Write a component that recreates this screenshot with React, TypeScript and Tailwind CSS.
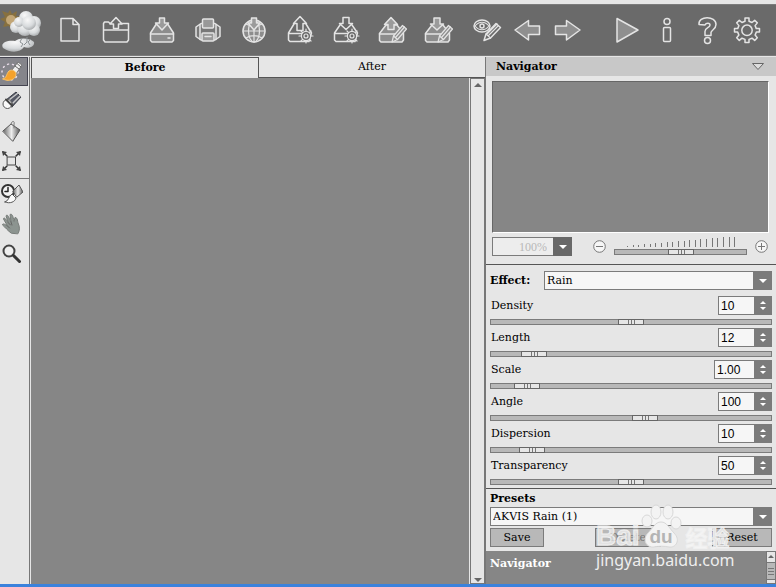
import React, { useState } from 'react';

interface IconButtonProps {
  label: string;
  className?: string;
  children: React.ReactNode;
}

const ToolbarButton: React.FC<IconButtonProps> = ({ label, className = 'w-[46px]', children }) => (
  <button type="button" aria-label={label} className={`${className} flex h-full shrink-0 items-center justify-center`}>
    <svg
      width="30"
      height="30"
      viewBox="0 0 30 30"
      fill="none"
      stroke="#e4e4e4"
      strokeWidth="1.5"
      strokeLinejoin="round"
      strokeLinecap="round"
    >
      {children}
    </svg>
  </button>
);

const Gear = () => (
  <g strokeWidth="1.2">
    <circle cx="21" cy="21" r="4.6" fill="#6a6a6a" />
    <circle cx="21" cy="21" r="2" />
    <path d="M21 14v2M21 26v2M14 21h2M26 21h2M16 16l1.6 1.6M24.4 24.4l1.6 1.6M26 16l-1.6 1.6M17.6 24.4L16 26" />
  </g>
);

const Pencil = () => (
  <g strokeWidth="1.2">
    <path d="M15 27l1.5-6L25.500 10.500l4 3.500-9 10.500z" fill="#8c8c8c" />
    <path d="M16.500 21l4 3.500M18.500 22.500l9-10.500" />
  </g>
);

const Logo = () => (
  <svg width="42" height="44" viewBox="0 0 42 44" className="shrink-0" aria-label="Weather effects" role="img">
    <defs>
      <radialGradient id="puff" cx="0.4" cy="0.3" r="0.75">
        <stop offset="0" stopColor="#f8f8f8" />
        <stop offset="0.6" stopColor="#d8dbdd" />
        <stop offset="1" stopColor="#a4a7a9" />
      </radialGradient>
    </defs>
    <path
      d="M10 2l2 4 5-3-1 5 6 1-4 4 2 6-5-1-3 5-3-5-6 1 2-5-5-3 5-2-3-6 6 2z"
      fill="#87703f"
    />
    <circle cx="11" cy="12" r="5" fill="#c2a676" />
    <g fill="url(#puff)">
      <circle cx="26" cy="10" r="7" />
      <circle cx="34" cy="15" r="7" />
      <circle cx="16" cy="19" r="6" />
      <circle cx="25" cy="20" r="8" />
      <circle cx="34" cy="22" r="6" />
      <circle cx="19" cy="14" r="5" />
      <circle cx="29" cy="15" r="7" />
      <path d="M3 40c-3-5 4-8 12-7 5-4 15-3 19 1 1 4-5 7-10 5-4 6-14 6-21 1z" />
    </g>
    <path d="M22 30l-2 4 3 2-2 3M27 29v5l-3 3M31 31l-3 3 2 3" stroke="#8c9295" fill="none" />
  </svg>
);

const Globe = () => (
  <>
    <circle cx="15" cy="16" r="11" fill="#8c8c8c" />
    <path d="M4 16h22M15 5v22M7 9c5 3 11 3 16 0M7 23c5-3 11-3 16 0" strokeWidth="1.2" />
    <ellipse cx="15" cy="16" rx="5.5" ry="11" strokeWidth="1.2" />
    <path d="M12.500 3h5v5h3.500l-6 7-6-7h3.500z" fill="#9b9b9b" />
  </>
);

const Toolbar = () => (
  <header className="flex h-[52px] shrink-0 items-center border-y border-y-[#7b7b7b] bg-[#6a6a6a]">
    <div className="flex w-[47px] shrink-0">
      <Logo />
    </div>
    <div className="flex h-full">
      <ToolbarButton label="New">
        <path d="M6 3.500h12l6 6V26H6zM18 3.500v6h6" />
      </ToolbarButton>
      <ToolbarButton label="Open">
        <path d="M10 8.500H9L7.500 7H3.500L2.500 8.500V25L4 27h22l1.500-2V8.500h-7M2.500 15h25" />
        <path d="M15 2.500l6 6.500h-3.500v4.500h-5V9H9z" fill="#6a6a6a" />
      </ToolbarButton>
      <ToolbarButton label="Save">
        <path d="M9 9.500L3.500 18v7.500L5 27h20l1.500-1.500V18L21 9.500z" fill="#8c8c8c" />
        <path d="M3.500 19h23M21 23h2" />
        <path d="M12.500 3h5v5h4l-6.500 7-6.500-7h4z" fill="#9b9b9b" />
      </ToolbarButton>
      <ToolbarButton label="Print">
        <path d="M8 8.500L3 12v9.500L8 25h14l5-3.500V12L22 8.500z" fill="#787878" />
        <path d="M7 9.500v15M23 9.500v15" />
        <rect x="9.5" y="4" width="11" height="9" rx="1" fill="#999" />
        <rect x="9" y="18" width="12" height="8" rx="1" fill="#999" />
        <path d="M12 21.500h6" />
      </ToolbarButton>
      <ToolbarButton label="Publish">
        <Globe />
      </ToolbarButton>
      <ToolbarButton label="Load presets">
        <path d="M9 9L3.500 18v7L5 26.500h19L26.500 18 21 9M3.500 18.500H20" />
        <path d="M15 1.500l6.500 7H18v7h-6v-7H8.500z" fill="#6a6a6a" />
        <Gear />
      </ToolbarButton>
      <ToolbarButton label="Save presets">
        <path d="M9 10l-5.500 8v7L5 26.500h19L26.500 18 21 10M3.500 18.500H20" />
        <path d="M12 2.500h6v6h3.500l-6.500 6-6.500-6H12z" fill="#6a6a6a" />
        <Gear />
      </ToolbarButton>
      <ToolbarButton label="Load strokes">
        <path d="M9 10l-6.500 8.500v7L4 27h21l1.500-2v-6.500L20 10z" fill="#8c8c8c" />
        <path d="M2.500 19H18" />
        <path d="M14 2.500l6.500 7H17v5h-6v-5H7.500z" fill="#9b9b9b" />
        <Pencil />
      </ToolbarButton>
      <ToolbarButton label="Save strokes">
        <path d="M9 10l-6.500 8.500v7L4 27h21l1.500-2v-6.500L20 10z" fill="#8c8c8c" />
        <path d="M2.500 19H18" />
        <path d="M11 3h6v6h3.500L14 15 7.500 9H11z" fill="#9b9b9b" />
        <Pencil />
      </ToolbarButton>
    </div>
    <div className="ml-1.5 flex h-full">
      <ToolbarButton label="Show strokes" className="w-10">
        <ellipse cx="10" cy="11" rx="8" ry="6" />
        <path d="M3 11c4-5 10-5 14 0-4 5-10 5-14 0z" strokeWidth="1.2" />
        <circle cx="10" cy="11" r="2" />
        <path d="M12 25.500l2-6.500L24 8.500l4.500 4L18.500 23z" fill="#6a6a6a" />
        <path d="M14 19l4.500 4M17 20l9-9M15.500 18.500L25 9" strokeWidth="1.2" />
      </ToolbarButton>
      <ToolbarButton label="Undo" className="w-10">
        <path d="M3 15L16.500 5.500V11h11v8.500h-11V25z" fill="#8f8f8f" />
      </ToolbarButton>
      <ToolbarButton label="Redo" className="w-10">
        <path d="M28 15L14.500 5.500V11h-11v8.500h11V25z" fill="#8f8f8f" />
      </ToolbarButton>
    </div>
    <div className="ml-5 flex h-full">
      <ToolbarButton label="Run" className="w-10">
        <path d="M5 3.500v23.500l21-12z" fill="#8f8f8f" />
      </ToolbarButton>
      <ToolbarButton label="About" className="w-10">
        <circle cx="15" cy="6.5" r="3" />
        <rect x="11.5" y="12.5" width="7" height="14" rx="1" />
      </ToolbarButton>
      <ToolbarButton label="Help" className="w-10">
        <path d="M7 9.500c-1-9 17-9 17 0 0 5-5 5.500-5 8v3h-6v-4c0-4 5-3.500 5-6.500 0-2.500-4-2.500-5 0z" />
        <circle cx="15.5" cy="25.5" r="3" />
      </ToolbarButton>
      <ToolbarButton label="Preferences" className="w-10">
        <path d="M13 6.300V3h4v3.300l3 1.200 2.700-2.200 2.600 2.600-2.200 2.700 1.200 3H27.500v3.500h-3.200l-1.200 3 2.200 2.600-2.600 2.700-2.700-2.200-3 1.200V27.500h-4v-3.100l-3-1.200-2.700 2.200-2.600-2.700 2.200-2.600-1.200-3H2.500v-3.500h3.200l1.200-3-2.200-2.700 2.600-2.600L10 7.500z" />
        <circle cx="15" cy="15.3" r="5.2" />
      </ToolbarButton>
    </div>
  </header>
);

const SideButton: React.FC<IconButtonProps> = ({ label, className = 'h-[30px]', children }) => (
  <button type="button" aria-label={label} className={`${className} flex w-7 shrink-0 items-center pl-px`}>
    <svg width="22" height="22" viewBox="0 0 22 22" fill="none" strokeLinejoin="round" strokeLinecap="round">
      <defs>
        <linearGradient id="metal">
          <stop offset="0" stopColor="#666" />
          <stop offset="0.5" stopColor="#eee" />
          <stop offset="1" stopColor="#555" />
        </linearGradient>
      </defs>
      {children}
    </svg>
  </button>
);

const SideTools = () => (
  <nav aria-label="Tools" className="flex w-[29px] shrink-0 flex-col">
    <SideButton label="Effect brush" className="h-[29px] border border-l-0 border-[#444450] bg-[#85858b]">
      <circle cx="9" cy="11" r="8" stroke="#e8dce8" strokeWidth="1.5" strokeDasharray="1 4" />
      <path d="M11 9l6-8 4 3-6 9z" fill="#eee" stroke="#777" />
      <path d="M14 5l4 3M16 2.500l4 3.500" stroke="#666" />
      <path d="M2 18c4-1 3-5 6-8 3-2 7 0 7 3 0 6-8 8-13 5z" fill="#f5a22c" stroke="#f9c46a" />
    </SideButton>
    <SideButton label="Eraser">
      <path d="M5 10L15 2l5 5-9 10z" fill="#555865" stroke="#3c3f48" />
      <path d="M8 10l9-7M12 13l7-7" stroke="#c8c8c8" strokeWidth="1.5" />
      <circle cx="6.5" cy="14" r="4.5" fill="#fafafa" stroke="#555" />
      <path d="M5 9.500l6 6" stroke="#444" strokeWidth="2" />
    </SideButton>
    <SideButton label="Bucket">
      <path d="M2 11l8-7 9 6-7 11z" fill="url(#metal)" stroke="#555" />
      <path d="M10 4c1-4 4-3 3 0v4" stroke="#777" />
    </SideButton>
    <SideButton label="Transform">
      <rect x="6.5" y="7" width="8" height="8" stroke="#444" />
      <path d="M6 6L2 2M15 6l4-4M6 16l-4 4M15 16l4 4" stroke="#333" strokeWidth="1.5" />
      <path d="M1 1l5 1-4 4zM20 1l-5 1 4 4zM1 21l5-1-4-4zM20 21l-5-1 4-4z" fill="#444" />
    </SideButton>
    <div className="mt-0.5 border-t border-[#777]">
      <SideButton label="History brush">
        <circle cx="7" cy="8" r="6" fill="#f4f4f4" stroke="#333" strokeWidth="2" />
        <path d="M7 4.500V8.500H4" stroke="#222" strokeWidth="1.5" />
        <path d="M12 8l6-6 4 7-6 5z" fill="url(#metal)" stroke="#555" />
        <path d="M4 19c4-1 3-5 7-8l4 4c-1 4-6 6-11 4z" fill="#fafafa" stroke="#555" />
      </SideButton>
      <SideButton label="Hand">
        <path
          d="M10 20C6 17 5 15 1.500 12c0-2 2-1 5 1L2.500 6c0-2 2-1 5 4L5 3c1-2 2-1 5 6L9 1.500c2-1 3 1 4 7l1-4c3 0 2 4 4 8 1 4 0 6-1 8z"
          fill="#8c9490"
          stroke="#777c79"
        />
        <path d="M6.500 13l2 2M7.500 10l2 2M10 9l1 3" stroke="#666" />
      </SideButton>
      <SideButton label="Zoom">
        <circle cx="8" cy="8" r="5.5" stroke="#444" strokeWidth="2" fill="#efefef" />
        <path d="M12.500 12.500l6 6" stroke="#333" strokeWidth="3" />
      </SideButton>
    </div>
  </nav>
);

const ArrowDown = () => (
  <svg width="8" height="4" viewBox="0 0 8 4">
    <path d="M0 0h8L4 4z" fill="#fff" />
  </svg>
);

interface SelectBoxProps {
  id: string;
  options: string[];
}

const SelectBox: React.FC<SelectBoxProps> = ({ id, options }) => (
  <div className="relative flex-1">
    <select
      id={id}
      className="block h-[19px] w-full appearance-none border border-[#7b7b7b] bg-[#f6f6f6] pl-0.5 font-[DejaVu_Serif,serif] text-[11px] leading-4"
    >
      {options.map((option) => (
        <option key={option}>{option}</option>
      ))}
    </select>
    <span className="pointer-events-none absolute inset-y-0 right-0 flex w-[19px] items-center justify-center bg-[#7b7b7b]">
      <ArrowDown />
    </span>
  </div>
);

interface Effect {
  label: string;
  value: number;
  min: number;
  max: number;
  step: number;
  digits: number;
}

const effects: Effect[] = [
  { label: 'Density', value: 10, min: 0, max: 20, step: 1, digits: 0 },
  { label: 'Length', value: 12, min: 0, max: 100, step: 1, digits: 0 },
  { label: 'Scale', value: 1, min: 0.1, max: 10, step: 0.1, digits: 2 },
  { label: 'Angle', value: 100, min: 0, max: 180, step: 1, digits: 0 },
  { label: 'Dispersion', value: 10, min: 0, max: 90, step: 1, digits: 0 },
  { label: 'Transparency', value: 50, min: 0, max: 100, step: 1, digits: 0 },
];

const sliderClass =
  'block h-1.5 appearance-none border border-[#7b7b7b] bg-[#b8b8b8] [&::-webkit-slider-thumb]:h-1.5 [&::-webkit-slider-thumb]:w-[26px] [&::-webkit-slider-thumb]:appearance-none [&::-webkit-slider-thumb]:border [&::-webkit-slider-thumb]:border-[#666] [&::-webkit-slider-thumb]:bg-[#e6e6e6] [&::-webkit-slider-thumb]:bg-[linear-gradient(90deg,transparent_9px,#777_9px,#777_10px,transparent_10px,transparent_12px,#777_12px,#777_13px,transparent_13px,transparent_15px,#777_15px,#777_16px,transparent_16px)]';

const EffectRow: React.FC<{ effect: Effect }> = ({ effect }) => {
  const [value, setValue] = useState(effect.value);
  const id = effect.label.toLowerCase();

  const change = (next: number) => {
    if (Number.isNaN(next)) return;
    setValue(Math.min(effect.max, Math.max(effect.min, next)));
  };

  return (
    <div className="flex h-8 flex-col">
      <div className="flex h-[19px] items-center justify-between">
        <label htmlFor={id} className="pl-px">{effect.label}</label>
        <div className="flex">
          <input
            id={id}
            type="text"
            value={value.toFixed(effect.digits)}
            onChange={(e) => change(Number(e.target.value))}
            className={`${effect.digits ? 'w-10' : 'w-9'} h-[19px] border border-r-0 border-[#7b7b7b] bg-[#f6f6f6] pl-0.5 font-[Liberation_Sans,sans-serif] text-xs`}
          />
          <div className="flex w-[18px] flex-col items-center justify-center gap-[3px] bg-[#7b7b7b]">
            <button type="button" aria-label={`Increase ${effect.label}`} onClick={() => change(value + effect.step)}>
              <svg width="6" height="3" viewBox="0 0 6 3" className="block">
                <path d="M0 3h6L3 0z" fill="#fff" />
              </svg>
            </button>
            <button type="button" aria-label={`Decrease ${effect.label}`} onClick={() => change(value - effect.step)}>
              <svg width="6" height="3" viewBox="0 0 6 3" className="block">
                <path d="M0 0h6L3 3z" fill="#fff" />
              </svg>
            </button>
          </div>
        </div>
      </div>
      <input
        type="range"
        aria-label={`${effect.label} slider`}
        min={effect.min}
        max={effect.max}
        step={effect.step}
        value={value}
        onChange={(e) => change(Number(e.target.value))}
        className={`${sliderClass} mt-1 w-full`}
      />
    </div>
  );
};

const ticks = Array.from({ length: 20 }, (_, i) => i);

const Navigator = () => (
  <section>
    <div className="flex h-[19px] items-center justify-between bg-[#c8c8c8] pr-3 pl-2.5">
      <h2 className="font-bold">Navigator</h2>
      <button type="button" aria-label="Collapse navigator">
        <svg width="12" height="7" viewBox="0 0 12 7" className="block">
          <path d="M.5.5h11L6 6.500z" fill="#ddd" stroke="#666" />
        </svg>
      </button>
    </div>
    <div className="mt-[5px] mr-[7px] ml-1.5 h-[152px] border border-[#666] border-r-white border-b-white bg-[#868686]" />
    <div className="mt-1 mr-2 ml-1.5 flex h-[27px] items-start">
      <div className="relative w-20 shrink-0">
        <select
          aria-label="Zoom"
          disabled
          className="block h-[19px] w-full appearance-none border border-[#7b7b7b] bg-[#ededed] pr-6 text-right font-[Liberation_Serif,serif] text-xs leading-4 text-[#b8b8b8] opacity-100"
        >
          <option>100%</option>
        </select>
        <span className="pointer-events-none absolute inset-y-0 right-0 flex w-[19px] items-center justify-center bg-[#686868]">
          <ArrowDown />
        </span>
      </div>
      <button type="button" aria-label="Zoom out" className="mt-[3px] ml-[21px]">
        <svg width="13" height="13" viewBox="0 0 13 13" fill="#f6f6f6" stroke="#777" className="block">
          <circle cx="6.5" cy="6.5" r="5.8" />
          <path d="M3 6.500h7" />
        </svg>
      </button>
      <div className="mx-2 flex-1">
        <svg width="112" height="11" viewBox="0 0 112 11" className="ml-3 block" shapeRendering="crispEdges">
          {ticks.map((i) => {
            const height = 1 + Math.round(i * 0.5);
            return <rect key={i} x={1 + Math.round(i * 5.65)} y={10 - height} width="1" height={height} fill="#777" />;
          })}
        </svg>
        <input
          type="range"
          aria-label="Zoom level"
          defaultValue={50}
          className={`${sliderClass} mt-px w-full`}
        />
      </div>
      <button type="button" aria-label="Zoom in" className="mt-[3px]">
        <svg width="13" height="13" viewBox="0 0 13 13" fill="#f6f6f6" stroke="#777" className="block">
          <circle cx="6.5" cy="6.5" r="5.8" />
          <path d="M3 6.500h7M6.500 3v7" />
        </svg>
      </button>
    </div>
  </section>
);

const presetButton = 'h-[19px] border border-[#7b7b7b] bg-[#b8b8b8]';

const Watermark = () => (
  <div className="pointer-events-none absolute bottom-3.5 left-[110px] w-[150px] whitespace-nowrap">
    <div className="flex h-12 items-end text-white/60">
      <span className="font-[Liberation_Sans,sans-serif] text-[28px] leading-7 font-bold [-webkit-text-stroke:1px_#f0f0f0]">
        Bai
      </span>
      <svg width="42" height="46" viewBox="0 0 42 46" fill="#f3f3f3" stroke="#d8d8d8" className="mr-1">
        <ellipse cx="7" cy="17" rx="5" ry="6" />
        <ellipse cx="16" cy="8" rx="5" ry="7" />
        <ellipse cx="28" cy="8" rx="5" ry="7" />
        <ellipse cx="36" cy="19" rx="5" ry="6" />
        <path d="M21 18c6 0 8 6 13 11 7 7 2 15-5 14-5-1-10-1-15 0-8 1-12-8-6-14 5-5 7-11 13-11z" />
        <text
          x="21"
          y="39"
          textAnchor="middle"
          fill="#b4b4b4"
          stroke="none"
          fontSize="19"
          fontWeight="bold"
          fontFamily="Liberation Sans, sans-serif"
        >
          du
        </text>
      </svg>
      <span
        className="font-[Noto_Sans_CJK_SC,sans-serif] text-[22px] leading-7 font-bold [-webkit-text-stroke:1px_#f0f0f0]"
        lang="zh-CN"
      >
        经验
      </span>
    </div>
    <div className="font-[Noto_Sans,sans-serif] text-base leading-5 text-[#eeeeee]">jingyan.baidu.com</div>
  </div>
);

const SidePanel = () => (
  <aside className="relative flex w-[291px] shrink-0 flex-col border-l border-[#777] font-[DejaVu_Serif,serif] text-[11px] leading-4 text-black">
    <Navigator />
    <section className="border-t border-[#555] pt-1.5 pr-1 pl-1">
      <div className="mb-1.5 flex h-[19px] items-center gap-1.5">
        <label htmlFor="effect" className="w-12 font-bold">Effect:</label>
        <SelectBox id="effect" options={['Rain', 'Snow']} />
      </div>
      {effects.map((effect) => (
        <EffectRow key={effect.label} effect={effect} />
      ))}
    </section>
    <section className="border-t border-[#555] pt-0.5 pr-1 pl-1">
      <label htmlFor="preset" className="block font-bold">Presets</label>
      <div className="flex">
        <SelectBox id="preset" options={['AKVIS Rain (1)']} />
      </div>
      <div className="mt-0.5 mb-1 flex justify-between">
        <button type="button" className={`${presetButton} w-[54px]`}>Save</button>
        <button type="button" className={`${presetButton} w-[66px] text-[#777]`} disabled>Delete</button>
        <button type="button" className={`${presetButton} w-[60px]`}>Reset</button>
      </div>
    </section>
    <section className="flex flex-1 justify-between bg-[#868686] pl-1">
      <h2 className="pt-[5px] font-bold text-white">Navigator</h2>
      <div className="flex w-2.5 flex-col border border-[#777] bg-[#e6e6e6]">
        <svg width="8" height="10" viewBox="0 0 8 10" className="shrink-0">
          <path d="M1 6h6L4 3z" fill="#666" />
        </svg>
        <div className="flex h-[18px] flex-col items-center justify-center gap-0.5 border-y border-[#777] bg-[#b8b8b8]">
          <span className="h-px w-1.5 bg-[#777]" />
          <span className="h-px w-1.5 bg-[#777]" />
          <span className="h-px w-1.5 bg-[#777]" />
        </div>
      </div>
    </section>
    <Watermark />
  </aside>
);

const Workspace = () => (
  <main className="flex min-w-0 flex-1 flex-col border-l border-[#777] pl-px font-[DejaVu_Serif,serif] text-[11px] leading-4 text-black">
    <div role="tablist" className="flex h-[21px] shrink-0">
      <button
        type="button"
        role="tab"
        aria-selected="true"
        className="flex-1 border border-b-0 border-[#555] font-bold"
      >
        Before
      </button>
      <button type="button" role="tab" aria-selected="false" className="flex-1 border-b border-[#555]">
        After
      </button>
    </div>
    <div className="flex flex-1">
      <div className="flex-1 bg-[#868686]" />
      <div className="ml-px flex w-[15px] flex-col items-center justify-between border border-[#777] pt-1 pb-px">
        <svg width="8" height="4" viewBox="0 0 8 4">
          <path d="M0 4h8L4 0z" fill="#666" />
        </svg>
        <svg width="8" height="4" viewBox="0 0 8 4">
          <path d="M0 0h8L4 4z" fill="#666" />
        </svg>
      </div>
    </div>
  </main>
);

export default function App() {
  return (
    <div className="flex min-h-screen flex-col border-b-[3px] border-[#3b82dc] bg-[#e6e6e6] pt-1">
      <Toolbar />
      <div className="flex flex-1 pt-px">
        <SideTools />
        <Workspace />
        <SidePanel />
      </div>
    </div>
  );
}
